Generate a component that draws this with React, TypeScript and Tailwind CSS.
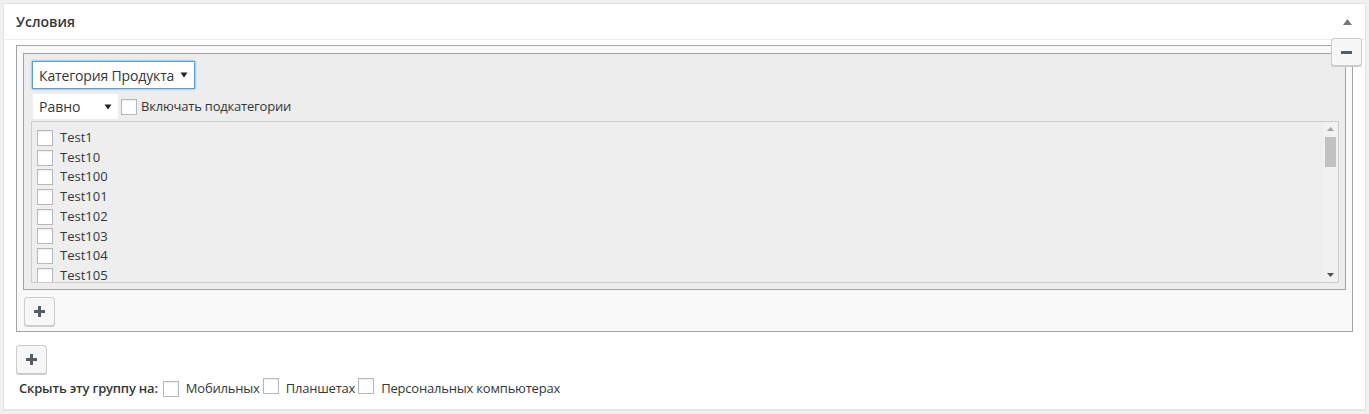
import React from "react";

const items = ["Test1", "Test10", "Test100", "Test101", "Test102", "Test103", "Test104", "Test105"];

function Box() {
  return <span className="inline-block h-4 w-4 shrink-0 border border-[#b4b9be] bg-white shadow-[inset_0_1px_2px_rgba(0,0,0,0.07)]" />;
}

function Caret() {
  return (
    <svg width="8" height="6" viewBox="0 0 8 6" className="shrink-0">
      <path d="M0.5 0.5h7L4 5.5z" fill="#222" />
    </svg>
  );
}

function PlusButton({ className = "" }: { className?: string }) {
  return (
    <button className={`flex h-[29px] w-[31px] items-center justify-center rounded-[3px] border border-[#cccccc] bg-[#f7f7f7] shadow-[0_1px_0_#cccccc] ${className}`}>
      <svg width="11" height="11" viewBox="0 0 11 11">
        <path d="M4 0h3v4h4v3H7v4H4V7H0V4h4z" fill="#555d66" />
      </svg>
    </button>
  );
}

export default function App() {
  return (
    <div className="h-[414px] w-full bg-[#f1f1f1] pt-[3px] pl-[3px] pr-[3px] text-[#32373c] [font-family:'Open_Sans','Noto_Sans',sans-serif]">
      <div className="h-[407px] border border-[#e5e5e5] bg-white shadow-[0_1px_1px_rgba(0,0,0,0.04)]">
        {/* header */}
        <div className="flex h-[36px] items-center justify-between border-b border-[#eeeeee] pl-[12px] pr-[13px]">
          <h2 className="text-[14px] font-semibold leading-none">Условия</h2>
          <svg width="9" height="6" viewBox="0 0 9 6">
            <path d="M0 6L4.5 0 9 6z" fill="#72777c" />
          </svg>
        </div>

        <div className="pl-[12px] pr-[12px] pt-[5px]">
          {/* group */}
          <div className="relative border border-[#a0a5aa] bg-[#f9f9f9] px-[6px] pt-[7px] pb-[5px]">
            <button className="absolute -top-[8px] -right-[10px] flex h-[28px] w-[31px] items-center justify-center rounded-[3px] border border-[#cccccc] bg-[#f7f7f7] shadow-[0_1px_0_#cccccc]">
              <span className="block h-[3px] w-[11px] bg-[#555d66]" />
            </button>

            <div className="border border-[#a0a5aa] bg-[#ededed] pl-[7px] pr-[6px] pt-[7px] pb-[6px]">
              <div className="ml-px flex h-[28px] w-[163px] items-center justify-between border border-[#5b9dd9] bg-white pl-[6px] pr-[6px] text-[14px] tracking-[-0.15px] shadow-[0_0_2px_rgba(30,140,190,0.8)]">
                <span>Категория Продукта</span>
                <Caret />
              </div>
              <div className="mt-[4px] flex items-center">
                <div className="ml-px flex h-[27px] w-[87px] items-center justify-between border border-[#eeeeee] bg-white pl-[6px] pr-[6px] text-[14px]">
                  <span>Равно</span>
                  <Caret />
                </div>
                <label className="ml-[2px] flex items-center gap-[4px] text-[13px] tracking-[-0.2px]">
                  <Box />
                  <span>Включать подкатегории</span>
                </label>
              </div>

              <div className="mt-[1px] flex h-[162px] border border-[#cccccc] bg-[#eeeeee]">
                <ul className="flex-1 overflow-hidden pl-[5px] pt-[6px]">
                  {items.map((t) => (
                    <li key={t} className="flex h-[19.7px] items-center gap-[7px] text-[13px]">
                      <Box />
                      <span>{t}</span>
                    </li>
                  ))}
                </ul>
                <div className="flex w-[15px] flex-col items-center bg-[#f1f1f1] py-[5px]">
                  <svg width="7" height="4" viewBox="0 0 7 4">
                    <path d="M0 4L3.5 0 7 4z" fill="#a3a3a3" />
                  </svg>
                  <div className="mt-[6px] h-[30px] w-[11px] bg-[#c1c1c1]" />
                  <div className="flex-1" />
                  <svg width="7" height="4" viewBox="0 0 7 4">
                    <path d="M0 0h7L3.5 4z" fill="#505050" />
                  </svg>
                </div>
              </div>
            </div>

            <PlusButton className="mt-[7px] ml-px" />
          </div>

          <PlusButton className="mt-[13px]" />

          <div className="mt-[4px] flex items-center pl-[3px] text-[13px] tracking-[-0.2px]">
            <span className="mr-[5px] font-semibold">Скрыть эту группу на:</span>
            <Box />
            <span className="ml-[7px]">Мобильных</span>
            <span className="ml-[3px]"><Box /></span>
            <span className="ml-[7px]">Планшетах</span>
            <span className="ml-[3px]"><Box /></span>
            <span className="ml-[7px]">Персональных компьютерах</span>
          </div>
        </div>
      </div>
    </div>
  );
}
